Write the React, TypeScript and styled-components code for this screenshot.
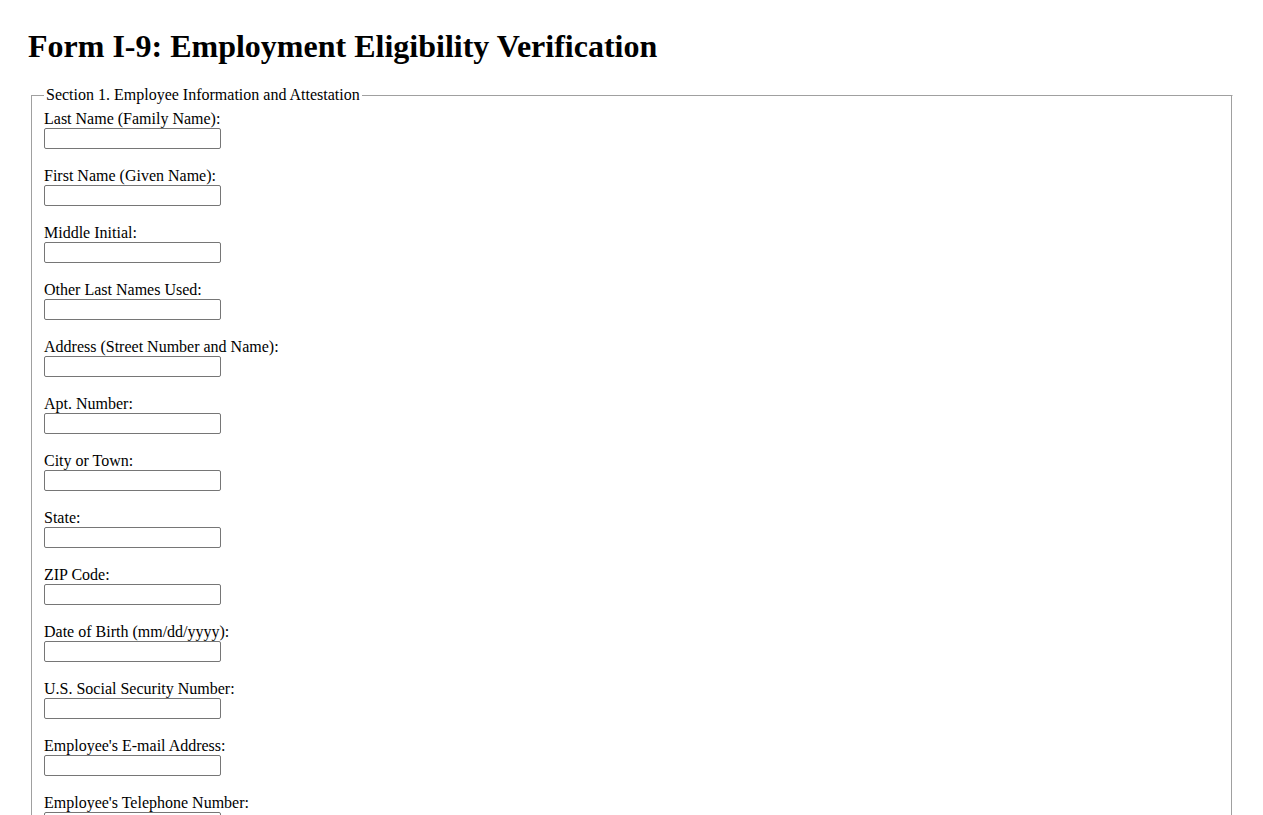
import React from "react";
import styled, { createGlobalStyle } from "styled-components";

const Global = createGlobalStyle`
  html { scrollbar-width: none; }
  html::-webkit-scrollbar { display: none; }
  body {
    margin: 0;
    padding: 28px;
    background: #ffffff;
    color: #000000;
    font-family: "Liberation Serif", "Times New Roman", serif;
    font-size: 16px;
  }
`;

const Page = styled.main`
  display: flex;
  flex-direction: column;
`;

const Title = styled.h1`
  margin: 0 0 22px 0;
  font-size: 32px;
  font-weight: bold;
  line-height: 36px;
  font-family: "Liberation Serif", "Times New Roman", serif;
`;

const Section = styled.fieldset`
  margin: 0 2px 0 3px;
  padding: 6px 12px 10px 12px;
  border-color: #a0a0a0 #ffffff #ffffff #a0a0a0;
  border-style: solid;
  border-width: 1px;
  box-shadow: inset -1px -1px 0 #a0a0a0, 1px 1px 0 #ffffff;
  min-width: 0;
`;

const Legend = styled.legend`
  padding: 0 2px;
  line-height: 18px;
`;

const Field = styled.div`
  display: flex;
  flex-direction: column;
  align-items: flex-start;
  margin-bottom: 18px;
`;

const Label = styled.label`
  display: block;
  line-height: 18px;
`;

const TextInput = styled.input`
  display: block;
  box-sizing: border-box;
  width: 177px;
  height: 21px;
  margin: 0;
  padding: 1px 2px;
  border: 1px solid #767676;
  border-radius: 2px;
  background: #ffffff;
  font-family: "Liberation Sans", Arial, sans-serif;
  font-size: 13.33px;
`;

const fields = [
  "Last Name (Family Name):",
  "First Name (Given Name):",
  "Middle Initial:",
  "Other Last Names Used:",
  "Address (Street Number and Name):",
  "Apt. Number:",
  "City or Town:",
  "State:",
  "ZIP Code:",
  "Date of Birth (mm/dd/yyyy):",
  "U.S. Social Security Number:",
  "Employee's E-mail Address:",
  "Employee's Telephone Number:",
];

export default function App() {
  return (
    <Page>
      <Global />
      <Title>Form I-9: Employment Eligibility Verification</Title>
      <Section>
        <Legend>Section 1. Employee Information and Attestation</Legend>
        {fields.map((f, i) => (
          <Field key={i}>
            <Label htmlFor={`f${i}`}>{f}</Label>
            <TextInput id={`f${i}`} type="text" />
          </Field>
        ))}
      </Section>
    </Page>
  );
}
